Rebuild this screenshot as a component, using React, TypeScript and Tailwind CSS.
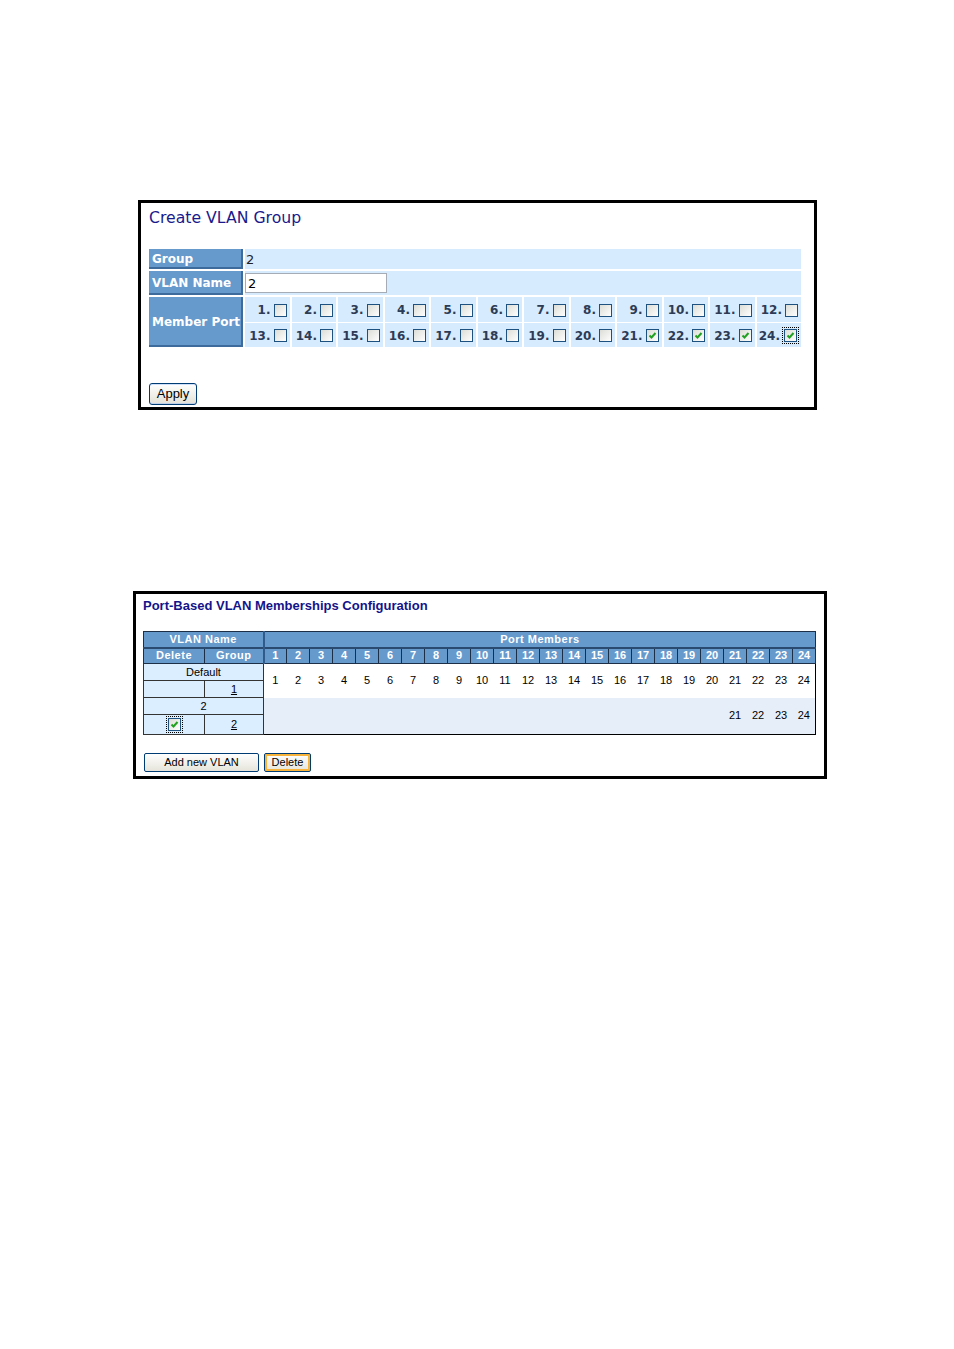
import React from 'react'

const ports = Array.from({ length: 24 }, (_, i) => i + 1)

function CheckBox({ checked = false, focus = false }: { checked?: boolean; focus?: boolean }) {
  return (
    <span className={focus ? 'inline-flex p-[1px] outline outline-1 outline-dotted outline-black' : 'inline-flex'}>
      <span className="inline-flex items-center justify-center w-[13px] h-[13px] border border-[#1c5180] bg-linear-to-br from-[#dcdcd7] to-white">
        {checked && (
          <svg width="9" height="9" viewBox="0 0 9 9">
            <path d="M1.5 4.5 L3.5 6.5 L7.5 2" fill="none" stroke="#21a121" strokeWidth="2" />
          </svg>
        )}
      </span>
    </span>
  )
}

export default function App() {
  const label = 'bg-[#6699cc] border-r-2 border-b-2 border-[#3d6b9b] text-white font-bold text-[12px] pl-[3px] pt-[2px] flex items-center'
  const head = 'border border-[#1d2f47] text-white font-bold text-[11px] tracking-[0.5px] p-0 text-center leading-[13px]'
  const cell = 'bg-[#dbeeff] border border-[#333] p-0 leading-[13px]'

  return (
    <div className="w-[954px] h-[1349px] bg-white pt-[200px] font-['DejaVu_Sans',sans-serif]">
      {/* Create VLAN Group */}
      <div className="ml-[138px] w-[679px] h-[210px] border-[3px] border-black pl-[8px] pt-[5px]">
        <h1 className="text-[15.7px] leading-[20px] text-[#1a1a8c]">Create VLAN Group</h1>
        <div className="mt-[21px] grid grid-cols-[94px_556px] grid-rows-[20px_24px_50px] gap-[2px]">
          <div className={label}>Group</div>
          <div className="bg-[#d6ebfd] flex items-center text-[13px] text-[#222] pl-[1px] pt-[2px]">2</div>
          <div className={label}>VLAN Name</div>
          <div className="bg-[#d6ebfd] flex items-center">
            <input
              defaultValue="2"
              className="w-[142px] h-[20px] border border-[#a5acb5] bg-white text-[13px] pl-[2px] text-black outline-none font-['DejaVu_Sans',sans-serif]"
            />
          </div>
          <div className={label}>Member Port</div>
          <div className="grid grid-cols-12 grid-rows-2 gap-x-[2px] gap-y-[1px]">
            {ports.map(p => (
              <div key={p} className="bg-[#d6ebfd] flex items-center justify-end pr-[3px] pt-[2px] gap-[3px] text-[12px] font-bold text-[#2d3b55]">
                <span>{p}.</span>
                <CheckBox checked={p >= 21} focus={p === 24} />
              </div>
            ))}
          </div>
        </div>
        <button className="mt-[36px] w-[48px] h-[22px] rounded-[3px] border border-[#003c74] bg-linear-to-b from-white to-[#e3e1d6] text-[13px] text-black font-['Liberation_Sans',sans-serif] shadow-[inset_0_-1px_0_#bfd0ea,inset_0_1px_0_#cfe0fa]">
          Apply
        </button>
      </div>

      {/* Port-Based VLAN Memberships Configuration */}
      <div className="ml-[133px] mt-[181px] w-[694px] h-[188px] border-[3px] border-black pl-[7px] pt-[4px] font-['Liberation_Sans',sans-serif]">
        <h2 className="text-[13px] leading-[16px] font-bold text-[#14148a]">Port-Based VLAN Memberships Configuration</h2>
        <table className="mt-[17px] border-collapse border border-black table-fixed w-[672px] text-[11px] text-black">
          <colgroup>
            <col className="w-[61px]" />
            <col className="w-[59px]" />
            {ports.map(p => (
              <col key={p} className="w-[23px]" />
            ))}
          </colgroup>
          <thead className="bg-[#6699cc]">
            <tr className="h-[16px]">
              <th colSpan={2} className={head + ' border-r-2 border-r-[#2f5a8a]'}>VLAN Name</th>
              <th colSpan={24} className={head}>Port Members</th>
            </tr>
            <tr className="h-[16px] border-t-2 border-t-[#2a4a70]">
              <th className={head}>Delete</th>
              <th className={head + ' border-r-2 border-r-[#2f5a8a]'}>Group</th>
              {ports.map(p => (
                <th key={p} className={head + ' tracking-normal'}>{p}</th>
              ))}
            </tr>
          </thead>
          <tbody>
            <tr className="h-[17px]">
              <td colSpan={2} className={cell + ' text-center'}>Default</td>
              {ports.map(p => (
                <td key={p} rowSpan={2} className="bg-white text-center p-0 leading-[13px]">{p}</td>
              ))}
            </tr>
            <tr className="h-[17px]">
              <td className={cell}></td>
              <td className={cell + ' text-center underline'}>1</td>
            </tr>
            <tr className="h-[17px]">
              <td colSpan={2} className={cell + ' text-center'}>2</td>
              {ports.map(p => (
                <td key={p} rowSpan={2} className="bg-[#e6eef9] text-center p-0 leading-[13px]">{p >= 21 ? p : ''}</td>
              ))}
            </tr>
            <tr className="h-[20px]">
              <td className={cell + ' text-center'}>
                <span className="inline-flex align-middle">
                  <CheckBox checked focus />
                </span>
              </td>
              <td className={cell + ' text-center underline'}>2</td>
            </tr>
          </tbody>
        </table>
        <div className="mt-[18px] flex gap-[5px] pl-[1px]">
          <button className="w-[115px] h-[19px] rounded-[2px] border border-[#003c74] bg-linear-to-b from-white to-[#e6e4da] text-[11px] text-black leading-none">
            Add new VLAN
          </button>
          <button className="w-[47px] h-[19px] rounded-[2px] border border-[#003c74] bg-linear-to-b from-white to-[#e6e4da] text-[11px] text-black leading-none shadow-[inset_0_0_0_2px_#f8b33a]">
            Delete
          </button>
        </div>
      </div>
    </div>
  )
}
